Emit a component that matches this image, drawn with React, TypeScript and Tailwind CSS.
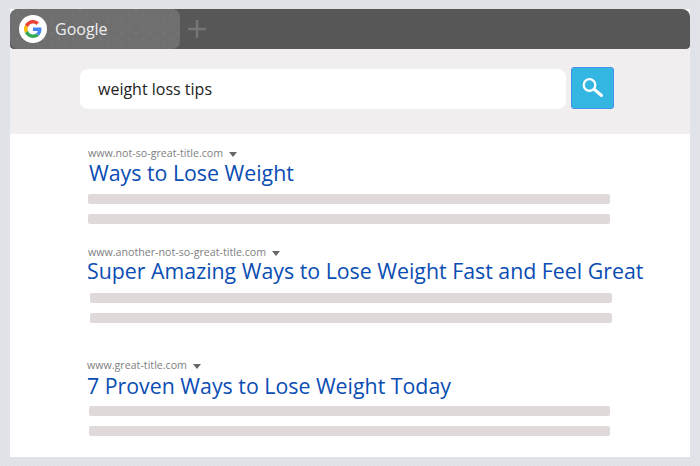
import React from "react";

function GoogleG() {
  return (
    <svg width="18" height="18" viewBox="0 0 48 48">
      <path fill="#EA4335" d="M24 9.5c3.9 0 6.9 1.6 9.1 3.6l6.8-6.8C35.8 2.5 30.4 0 24 0 14.6 0 6.6 5.4 2.6 13.2l7.9 6.2C12.4 13.6 17.7 9.5 24 9.5z" />
      <path fill="#4285F4" d="M46.5 24.5c0-1.6-.1-3.1-.4-4.5H24v9h12.7c-.6 3-2.2 5.4-4.7 7.1l7.6 5.9c4.4-4.1 6.9-10.1 6.9-17.5z" />
      <path fill="#FBBC05" d="M10.5 28.6c-.5-1.4-.8-3-.8-4.6s.3-3.2.8-4.6l-7.9-6.2C.9 16.5 0 20.1 0 24s.9 7.5 2.6 10.8l7.9-6.2z" />
      <path fill="#34A853" d="M24 48c6.5 0 11.9-2.1 15.6-5.8L32 36.3c-2.1 1.4-4.8 2.3-8 2.3-6.3 0-11.6-4.2-13.5-9.9l-7.9 6.2C6.6 42.6 14.6 48 24 48z" />
    </svg>
  );
}

function Result({ url, title, className, titleClass, barsClass }: { url: string; title: string; className: string; titleClass: string; barsClass: string }) {
  return (
    <div className={className}>
      <div className="flex items-center h-[14px] text-[10.67px] leading-[14px] text-[#808083]">
        <span>{url}</span>
        <span className="ml-[6px] mt-[2px] w-0 h-0 border-x-[4px] border-x-transparent border-t-[5px] border-t-[#666666]" />
      </div>
      <div className={`text-[21.33px] leading-[24px] text-[#0a4db3] whitespace-nowrap ${titleClass}`}>{title}</div>
      <div className={`flex flex-col gap-[10px] ${barsClass}`}>
        <div className="h-[10px] rounded-[2px] bg-[#dfd9d9]" />
        <div className="h-[10px] rounded-[2px] bg-[#dfd9d9]" />
      </div>
    </div>
  );
}

export default function App() {
  return (
    <div className="w-[700px] h-[466px] bg-[#e0e3e8] bg-[radial-gradient(circle,#dee1e6_0.7px,transparent_1px)] bg-[length:4px_4px] pt-[9px] px-[10px] overflow-hidden font-['Open_Sans',sans-serif]">
      <div className="w-[680px] h-[448px] bg-white flex flex-col">
        <div className="h-[40px] flex items-stretch bg-[#575757] rounded-t-[8px] rounded-b-[4px]">
          <div className="w-[170px] bg-[#6f6f6f] bg-[radial-gradient(circle,#7b7b7b_0.5px,transparent_1px),radial-gradient(circle,#7b7b7b_0.5px,transparent_1px)] bg-[length:14px_12px] bg-[position:0_0,7px_6px] rounded-[8px] flex items-center pl-[9px]">
            <div className="w-[28px] h-[28px] rounded-full bg-white flex items-center justify-center">
              <GoogleG />
            </div>
            <span className="ml-[8px] text-[16px] text-[#eeeeee]">Google</span>
          </div>
          <div className="ml-[8px] w-[18px] flex items-center justify-center">
            <svg width="18" height="18" viewBox="0 0 18 18">
              <path d="M9 0v18M0 9h18" stroke="#757575" strokeWidth="2.6" />
            </svg>
          </div>
        </div>
        <div className="h-[85px] bg-[#f0eeef] flex items-start pl-[70px]">
          <div className="mt-[20px] w-[486px] h-[40px] bg-white rounded-[8px] flex items-center pl-[18px] text-[16px] text-[#222222]">
            weight loss tips
          </div>
          <div className="ml-[5px] mt-[18px] w-[43px] h-[42px] bg-[#33b7e2] border border-[#4a8ff0] rounded-[3px] flex items-center justify-center">
            <svg width="22" height="22" viewBox="0 0 22 22" fill="none" stroke="white">
              <circle cx="7.5" cy="8" r="5.8" strokeWidth="2.2" />
              <path d="M12.5 12.5l7 6" strokeWidth="3" strokeLinecap="round" />
            </svg>
          </div>
        </div>
        <div className="flex-1">
          <Result url="www.not-so-great-title.com" title="Ways to Lose Weight" className="mt-[12px] ml-[78px] w-[522px]" titleClass="mt-[1px] ml-[1px]" barsClass="mt-[9px]" />
          <Result url="www.another-not-so-great-title.com" title="Super Amazing Ways to Lose Weight Fast and Feel Great" className="mt-[21px] ml-[78px] w-[523px]" titleClass="-ml-[1px]" barsClass="mt-[10px] ml-[2px] -mr-[1px]" />
          <Result url="www.great-title.com" title="7 Proven Ways to Lose Weight Today" className="mt-[35px] ml-[77px] w-[523px]" titleClass="mt-[2px]" barsClass="mt-[8px] ml-[2px]" />
        </div>
      </div>
    </div>
  );
}
